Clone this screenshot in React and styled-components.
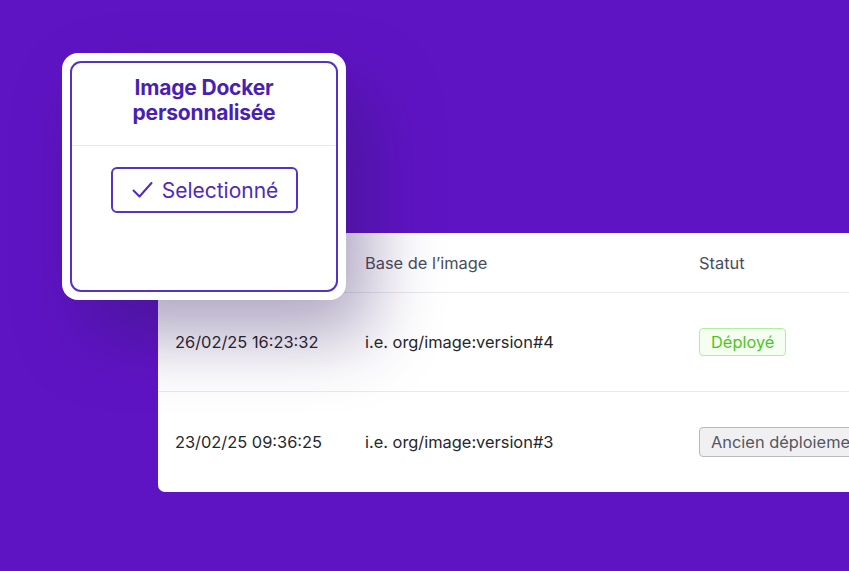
import React from "react";
import styled, { createGlobalStyle } from "styled-components";

const Global = createGlobalStyle`
  html, body { margin: 0; padding: 0; }
  body { background: #5f14c4; font-family: Inter, "Noto Sans", sans-serif; }
`;

const Stage = styled.div`
  position: relative;
  width: 849px;
  height: 571px;
  overflow: hidden;
  background: #5f14c4;
  padding: 233px 0 0 158px;
  box-sizing: border-box;
`;

const Table = styled.div`
  width: 740px;
  background: #fff;
  border-radius: 0 0 0 7px;
  color: #25262b;
`;

const Row = styled.div`
  display: grid;
  grid-template-columns: 190px 334px 1fr;
  align-items: center;
  padding-left: 17px;
  height: ${(p) => p.$h}px;
  border-bottom: ${(p) => (p.$last ? "none" : "1px solid #e9e9ee")};
  font-size: 16.4px;
  color: ${(p) => (p.$head ? "#4a4d59" : "#26272c")};
`;

const Badge = styled.span`
  justify-self: start;
  display: inline-flex;
  align-items: center;
  height: ${(p) => (p.$tone === "green" ? 26 : 28)}px;
  padding: 0 11px;
  border-radius: 4px;
  font-size: 16.4px;
  white-space: nowrap;
  border: 1px solid ${(p) => (p.$tone === "green" ? "#b2eea0" : "#b9b9c0")};
  background: ${(p) => (p.$tone === "green" ? "#f5fff1" : "#f0f0f3")};
  color: ${(p) => (p.$tone === "green" ? "#4fc41c" : "#55565e")};
`;

const FloatCard = styled.div`
  position: absolute;
  left: 62px;
  top: 53px;
  width: 284px;
  height: 247px;
  box-sizing: border-box;
  background: #fff;
  border-radius: 16px;
  padding: 8px;
  box-shadow: 24px 36px 70px rgba(45, 20, 95, 0.38);
`;

const Inner = styled.div`
  height: 100%;
  box-sizing: border-box;
  border: 2px solid #5634c2;
  border-radius: 11px;
  display: flex;
  flex-direction: column;
`;

const Title = styled.div`
  padding: 12px 10px 20px;
  text-align: center;
  font-weight: 700;
  font-size: 21px;
  line-height: 25px;
  color: #4a1fb3;
  letter-spacing: -0.2px;
  border-bottom: 1px solid #e7e7ec;
`;

const Body = styled.div`
  display: flex;
  justify-content: center;
  padding-top: 21px;
`;

const SelectButton = styled.button`
  display: inline-flex;
  align-items: center;
  gap: 9px;
  width: 187px;
  height: 46px;
  justify-content: center;
  box-sizing: border-box;
  background: #fff;
  border: 2px solid #5634c2;
  border-radius: 6px;
  font-family: Inter, "Noto Sans", sans-serif;
  font-size: 21px;
  color: #4f2bb8;
  padding: 0 0 0 2px;
`;

const rows = [
  { date: "26/02/25 16:23:32", img: "i.e. org/image:version#4", status: "Déployé", tone: "green" },
  { date: "23/02/25 09:36:25", img: "i.e. org/image:version#3", status: "Ancien déploiement", tone: "gray" },
];

export default function App() {
  return (
    <>
      <Global />
      <Stage>
        <Table>
          <Row $head $h={59}>
            <span></span>
            <span>Base de l’image</span>
            <span>Statut</span>
          </Row>
          {rows.map((r, i) => (
            <Row key={i} $h={i === 0 ? 98 : 100} $last={i === rows.length - 1}>
              <span>{r.date}</span>
              <span>{r.img}</span>
              <Badge $tone={r.tone}>{r.status}</Badge>
            </Row>
          ))}
        </Table>
        <FloatCard>
          <Inner>
            <Title>
              Image Docker
              <br />
              personnalisée
            </Title>
            <Body>
              <SelectButton>
                <svg width="21" height="18" viewBox="0 0 21 18" fill="none">
                  <path d="M1.5 9.5 L7.5 15.5 L19.5 2" stroke="#4f2bb8" strokeWidth="2" strokeLinecap="round" strokeLinejoin="round" />
                </svg>
                Selectionné
              </SelectButton>
            </Body>
          </Inner>
        </FloatCard>
      </Stage>
    </>
  );
}
